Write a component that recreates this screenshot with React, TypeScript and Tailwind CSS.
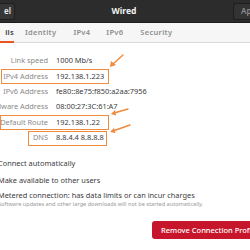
import React from "react";

const font = { fontFamily: '"Noto Sans", "Open Sans", sans-serif' };

function Row({ label, value }: { label: string; value: string }) {
  return (
    <div className="flex h-[15.4px] items-center">
      <div className="flex w-[48px] shrink-0 justify-end whitespace-nowrap text-[7.4px] text-[#8a8a8a]">
        {label}
      </div>
      <div className="ml-[8px] whitespace-nowrap text-[7.4px] text-[#3c3c3c]">{value}</div>
    </div>
  );
}

export default function App() {
  return (
    <div className="relative h-[250px] w-[250px] overflow-hidden bg-white" style={font}>
      {/* Header */}
      <div className="flex h-[23px] items-center justify-between border-b border-[#1c1c1c] bg-[#2c2c2c]">
        <div className="flex h-[17px] w-[15px] items-center justify-end rounded-r-[3px] border border-l-0 border-[#1f1f1f] bg-[#363636] pr-[3px] text-[8px] font-semibold text-[#e8e8e8]">
          <span className="whitespace-nowrap">el</span>
        </div>
        <div className="text-[8.5px] font-bold text-[#f2f2f2]">Wired</div>
        <div className="flex h-[17px] w-[17px] items-center rounded-l-[3px] border border-r-0 border-[#1f1f1f] bg-[#333333] pl-[7px] text-[8px] font-semibold text-[#8f8f8f]">
          <span className="whitespace-nowrap">Ap</span>
        </div>
      </div>

      {/* Tabs */}
      <div className="flex h-[20px] items-stretch border-b border-[#dadada] bg-[#f6f6f6] text-[7.5px] font-semibold tracking-[0.3px]">
        <div className="relative flex w-[14px] items-center justify-end">
          <span className="whitespace-nowrap text-[#3a3a3a]">ils</span>
          <div className="absolute bottom-[-1px] left-0 h-[2px] w-[14px] bg-[#e95420]" />
        </div>
        <div className="ml-[11px] flex items-center text-[#8e8e8e]">Identity</div>
        <div className="ml-[17px] flex items-center text-[#8e8e8e]">IPv4</div>
        <div className="ml-[16px] flex items-center text-[#8e8e8e]">IPv6</div>
        <div className="ml-[17px] flex items-center text-[#8e8e8e]">Security</div>
      </div>

      {/* Details rows */}
      <div className="mt-[10px] flex flex-col">
        <Row label="Link speed" value="1000 Mb/s" />
        <Row label="IPv4 Address" value="192.138.1.223" />
        <Row label="IPv6 Address" value="fe80::8e75:f850:a2aa:7956" />
        <Row label="Hardware Address" value="08:00:27:3C:61:A7" />
        <Row label="Default Route" value="192.138.1.22" />
        <Row label="DNS" value="8.8.4.4 8.8.8.8" />
      </div>

      {/* Checkbox options */}
      <div className="mt-[11px] flex flex-col text-[7.4px] text-[#3c3c3c]">
        <div className="-ml-[2px] h-[17px] whitespace-nowrap leading-[14px]">Connect automatically</div>
        <div className="-ml-[2px] h-[17px] whitespace-nowrap leading-[14px]">Make available to other users</div>
        <div className="-ml-[2px] whitespace-nowrap leading-[11px]">Metered connection: has data limits or can incur charges</div>
        <div className="-ml-[2px] whitespace-nowrap text-[5.6px] leading-[7px] text-[#9a9a9a]">
          Software updates and other large downloads will not be started automatically.
        </div>
      </div>

      {/* Remove button */}
      <div className="mt-[13px] flex justify-end">
        <div className="flex h-[18px] w-[98px] items-center rounded-l-[3px] bg-[#c7162b] pl-[9px] text-[7.5px] font-medium text-white">
          <span className="whitespace-nowrap">Remove Connection Profile</span>
        </div>
      </div>

      {/* Annotation boxes */}
      <div className="pointer-events-none absolute left-[1px] top-[69px] h-[15px] w-[108px] border-[1.5px] border-[#f08a3c]" />
      <div className="pointer-events-none absolute left-0 top-[115px] h-[15px] w-[109px] border-[1.5px] border-[#f08a3c]" />
      <div className="pointer-events-none absolute left-[28px] top-[131px] h-[15px] w-[79px] border-[1.5px] border-[#f08a3c]" />

      {/* Arrows */}
      <svg className="pointer-events-none absolute left-0 top-0" width="250" height="250" viewBox="0 0 250 250">
        <g stroke="#f08a3c" strokeWidth="1.4" fill="#f08a3c" strokeLinecap="round">
          <line x1="123" y1="55" x2="112" y2="65" />
          <polygon points="110,67 111,61 116,65" stroke="none" />
          <line x1="128" y1="109" x2="114" y2="113" />
          <polygon points="111,114 115,110 116,115.5" stroke="none" />
          <line x1="130" y1="125" x2="113" y2="131" />
          <polygon points="110,132 114,128 115.5,133" stroke="none" />
        </g>
      </svg>
    </div>
  );
}
